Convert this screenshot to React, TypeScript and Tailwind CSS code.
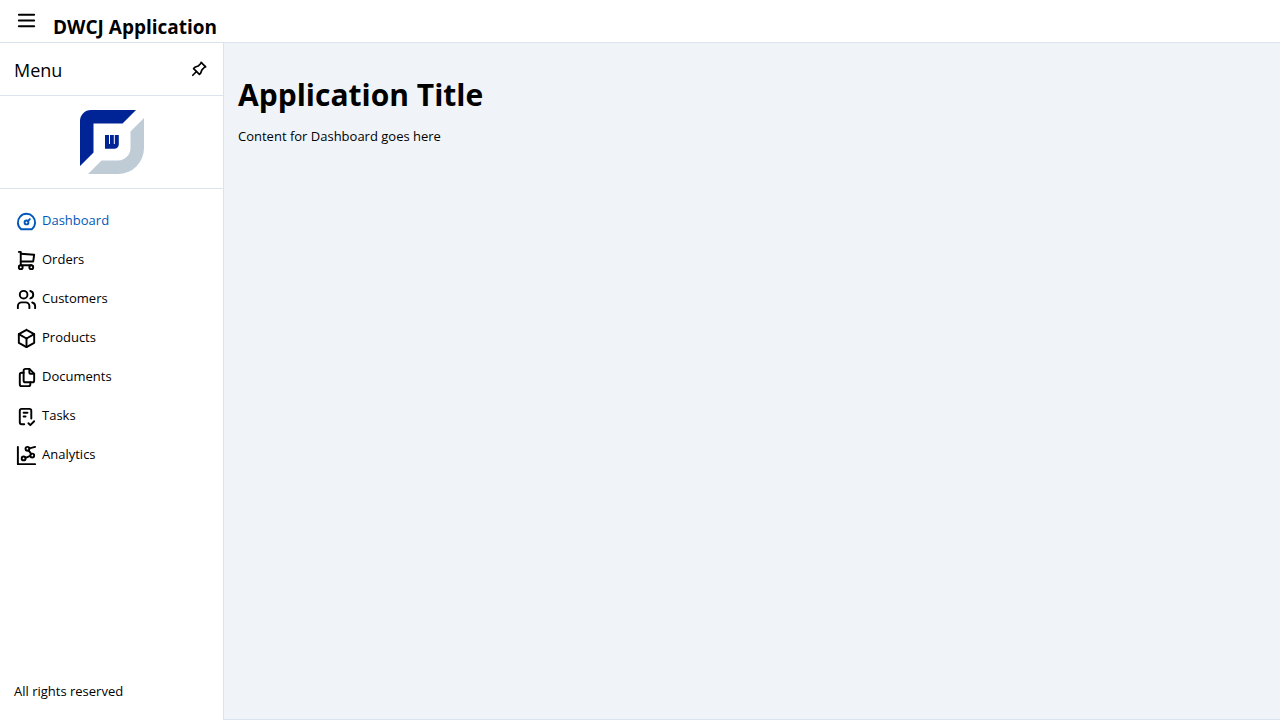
import { useState } from "react";
import type { IconType } from "react-icons";
import {
  TbBox,
  TbChartDots2,
  TbChecklist,
  TbDashboard,
  TbFiles,
  TbMenu2,
  TbPin,
  TbShoppingCart,
  TbUsers,
} from "react-icons/tb";

const items: { label: string; icon: IconType }[] = [
  { label: "Dashboard", icon: TbDashboard },
  { label: "Orders", icon: TbShoppingCart },
  { label: "Customers", icon: TbUsers },
  { label: "Products", icon: TbBox },
  { label: "Documents", icon: TbFiles },
  { label: "Tasks", icon: TbChecklist },
  { label: "Analytics", icon: TbChartDots2 },
];

function Logo() {
  return (
    <svg viewBox="0 0 64 64" className="size-16" role="img" aria-label="DWCJ">
      <path fill="#002395" d="M0 56V11A11 11 0 0 1 11 0H56L42.5 13.5H13.5V42.5Z" />
      <path fill="#bfccd6" d="M64 8V38A26 26 0 0 1 38 64H8L21.5 50.5H38A12.5 12.5 0 0 0 50.5 38V21.5Z" />
      <path fill="#002395" d="M25 25h4v9h1V25h3.8v9h1V25h4v9.2a4.5 4.5 0 0 1-4.5 4.5H25Z" />
    </svg>
  );
}

export default function App() {
  const [active, setActive] = useState("Dashboard");
  return (
    <div className="flex min-h-screen flex-col bg-white font-['Segoe_UI','Open_Sans',sans-serif] text-[13px] leading-5 text-black">
      <header className="flex h-[43px] items-center gap-[15px] border-b border-[#dbe4ee] px-[15px]">
        <button type="button" aria-label="Toggle menu" className="mb-0.5">
          <TbMenu2 className="size-[23px]" />
        </button>
        <h3 className="pt-3 text-[19px] leading-6 font-bold">DWCJ Application</h3>
      </header>
      <div className="flex flex-1">
        <aside className="flex w-56 shrink-0 flex-col border-r border-[#dbe4ee]">
          <div className="flex h-[53px] items-center justify-between border-b border-[#dbe4ee] px-3.5">
            <span className="pt-0.5 text-lg">Menu</span>
            <button type="button" aria-label="Pin menu">
              <TbPin className="size-5" />
            </button>
          </div>
          <div className="flex justify-center border-b border-[#dbe4ee] py-3.5">
            <Logo />
          </div>
          <nav className="flex flex-col py-[13px]">
            {items.map(({ label, icon: Icon }) => (
              <a
                key={label}
                href={`#${label.toLowerCase()}`}
                onClick={() => setActive(label)}
                className={`flex h-[39px] items-center gap-1 px-[15px] ${active === label ? "text-[#0059b8]" : "text-black"}`}
              >
                <Icon className="size-[23px]" />
                <span className="pb-1">{label}</span>
              </a>
            ))}
          </nav>
          <footer className="mt-auto px-3.5 pb-[19px]">All rights reserved</footer>
        </aside>
        <main className="flex-1 border-b border-[#dbe4ee] bg-[#f0f4f9] px-3.5 pt-8">
          <h1 className="text-3xl leading-10 font-bold">Application Title</h1>
          <p className="mt-[11px]">Content for {active} goes here</p>
        </main>
      </div>
    </div>
  );
}
